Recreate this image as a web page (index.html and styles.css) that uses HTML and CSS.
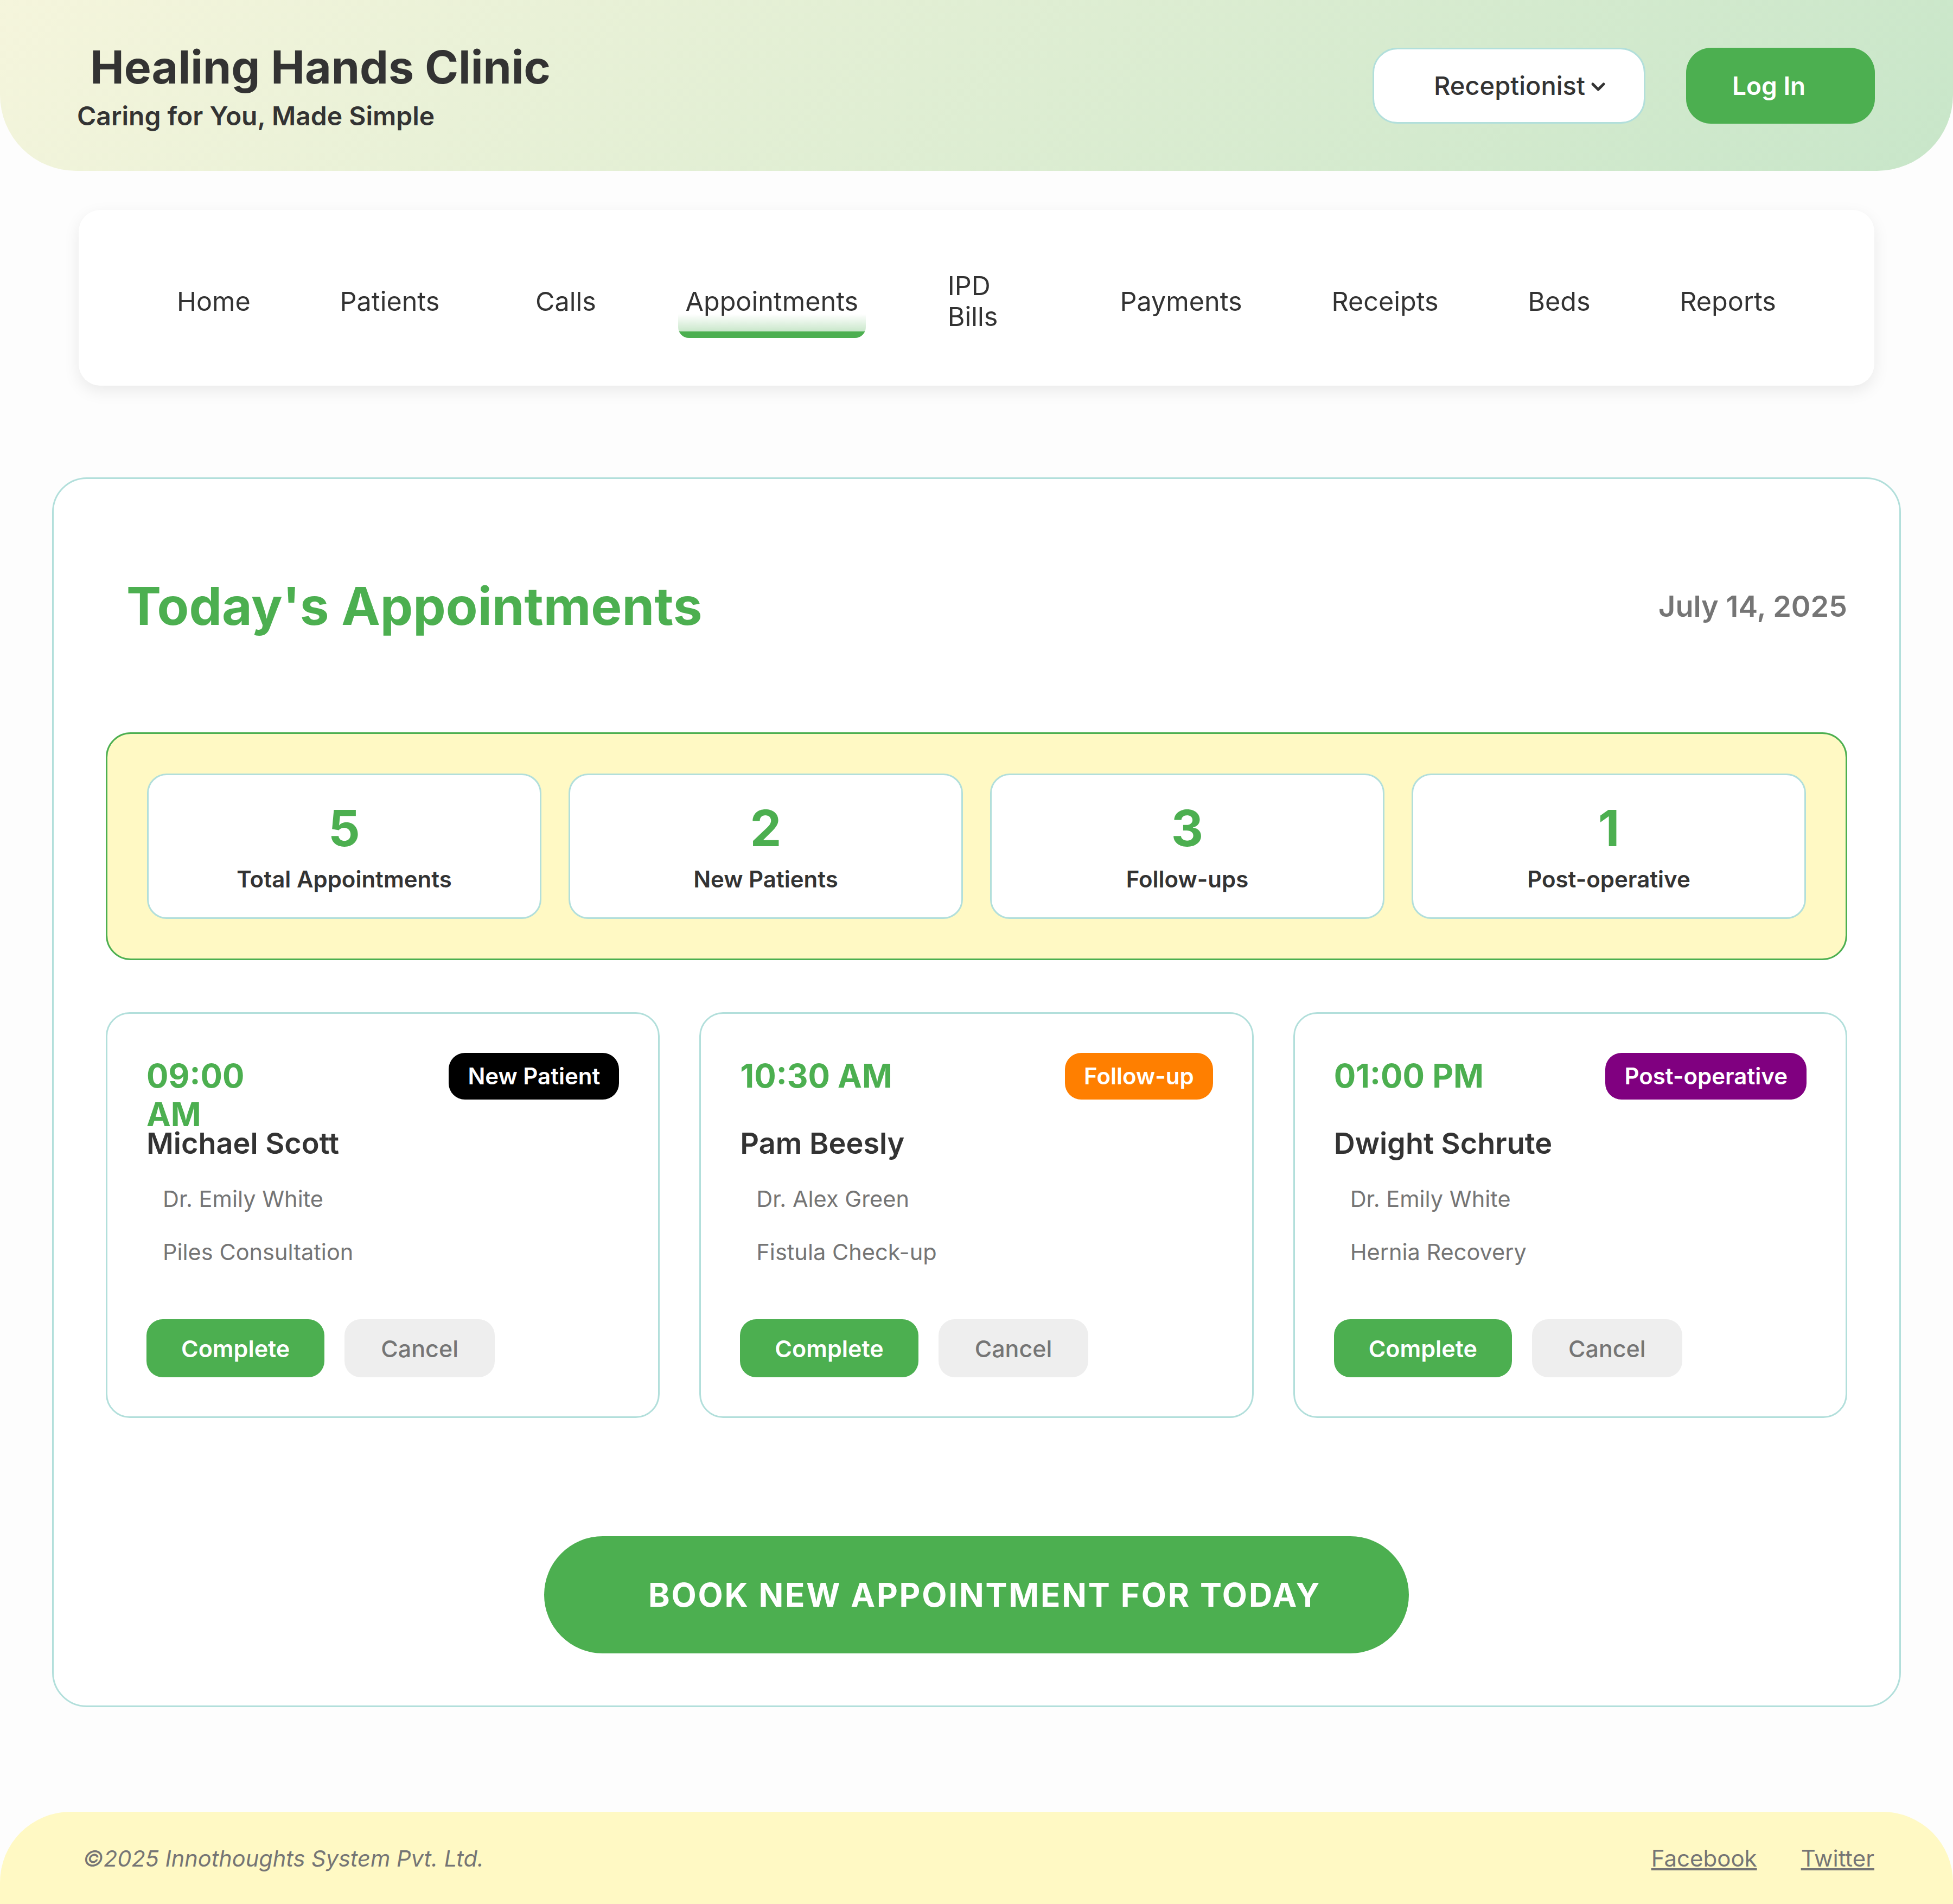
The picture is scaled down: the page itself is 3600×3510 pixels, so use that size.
FILE: index.html
```html
<!DOCTYPE html>
<html lang="en">
<head>
<meta charset="utf-8">
<title>Healing Hands Clinic</title>
<link rel="stylesheet" href="styles.css">
</head>
<body>
<header class="site-header">
  <div class="brand">
    <h1 class="brand-title">Healing Hands Clinic</h1>
    <p class="brand-tagline">Caring for You, Made Simple</p>
  </div>
  <div class="header-actions">
    <div class="role-select">
      <span>Receptionist</span>
      <svg class="chevron" viewBox="0 0 28 18" width="28" height="18" aria-hidden="true"><polyline points="4,4 14,14 24,4" fill="none" stroke="#333" stroke-width="5" stroke-linecap="round" stroke-linejoin="round"/></svg>
    </div>
    <button class="login-btn">Log In</button>
  </div>
</header>

<nav class="main-nav">
  <ul class="nav-list">
    <li><a class="nav-link" href="#">Home</a></li>
    <li><a class="nav-link" href="#">Patients</a></li>
    <li><a class="nav-link nav-link--calls" href="#">Calls</a></li>
    <li><a class="nav-link nav-link--active" href="#">Appointments</a></li>
    <li class="nav-item--narrow"><a class="nav-link" href="#">IPD Bills</a></li>
    <li><a class="nav-link" href="#">Payments</a></li>
    <li><a class="nav-link" href="#">Receipts</a></li>
    <li><a class="nav-link" href="#">Beds</a></li>
    <li><a class="nav-link" href="#">Reports</a></li>
  </ul>
</nav>

<main class="dashboard">
  <div class="dash-head">
    <h2 class="dash-title">Today's Appointments</h2>
    <div class="dash-date">July 14, 2025</div>
  </div>

  <section class="stats">
    <div class="stat-card"><div class="stat-num">5</div><div class="stat-label">Total Appointments</div></div>
    <div class="stat-card"><div class="stat-num">2</div><div class="stat-label">New Patients</div></div>
    <div class="stat-card"><div class="stat-num">3</div><div class="stat-label">Follow-ups</div></div>
    <div class="stat-card"><div class="stat-num">1</div><div class="stat-label">Post-operative</div></div>
  </section>

  <section class="appt-grid">
    <article class="appt-card">
      <div class="appt-head">
        <div class="appt-time appt-time--wrap">09:00 AM</div>
        <span class="badge badge--new">New Patient</span>
      </div>
      <h3 class="appt-name">Michael Scott</h3>
      <p class="appt-detail">Dr. Emily White</p>
      <p class="appt-detail appt-detail--last">Piles Consultation</p>
      <div class="appt-actions">
        <button class="btn btn--complete">Complete</button>
        <button class="btn btn--cancel">Cancel</button>
      </div>
    </article>
    <article class="appt-card">
      <div class="appt-head">
        <div class="appt-time">10:30 AM</div>
        <span class="badge badge--follow">Follow-up</span>
      </div>
      <h3 class="appt-name">Pam Beesly</h3>
      <p class="appt-detail">Dr. Alex Green</p>
      <p class="appt-detail appt-detail--last">Fistula Check-up</p>
      <div class="appt-actions">
        <button class="btn btn--complete">Complete</button>
        <button class="btn btn--cancel">Cancel</button>
      </div>
    </article>
    <article class="appt-card">
      <div class="appt-head">
        <div class="appt-time">01:00 PM</div>
        <span class="badge badge--postop">Post-operative</span>
      </div>
      <h3 class="appt-name">Dwight Schrute</h3>
      <p class="appt-detail">Dr. Emily White</p>
      <p class="appt-detail appt-detail--last">Hernia Recovery</p>
      <div class="appt-actions">
        <button class="btn btn--complete">Complete</button>
        <button class="btn btn--cancel">Cancel</button>
      </div>
    </article>
  </section>

  <div class="book-wrap">
    <button class="book-btn">Book New Appointment for Today</button>
  </div>
</main>

<footer class="site-footer">
  <p class="copyright">©2025 Innothoughts System Pvt. Ltd.</p>
  <div class="footer-links">
    <a href="#">Facebook</a>
    <a href="#">Twitter</a>
  </div>
</footer>
</body>
</html>
```

FILE: styles.css
```css
* { box-sizing: border-box; }

body {
  margin: 0;
  background: #fdfdfd;
  font-family: Inter, "Noto Sans", "Liberation Sans", sans-serif;
  color: #333;
}

/* Header */
.site-header {
  display: flex;
  justify-content: space-between;
  align-items: center;
  height: 315px;
  padding: 0 144px 0 142px;
  background: linear-gradient(135deg, #f5f5dc 0%, #c8e6c9 100%);
  border-radius: 0 0 140px 140px;
}
.brand-title {
  margin: 0 0 10px 24px;
  font-size: 84px;
  font-weight: 700;
  line-height: 102px;
  color: #333;
}
.brand-tagline {
  margin: 0;
  font-size: 48px;
  font-weight: 600;
  line-height: 58px;
  color: #333;
}
.header-actions {
  display: flex;
  align-items: center;
  gap: 75px;
}
.role-select {
  width: 503px;
  height: 140px;
  display: flex;
  align-items: center;
  justify-content: center;
  gap: 10px;
  padding-left: 40px;
  background: #fff;
  border: 3px solid #b2dfdb;
  border-radius: 46px;
  font-size: 47px;
  font-weight: 500;
  color: #333;
}
.chevron { display: block; margin-top: 4px; }
.login-btn {
  width: 348px;
  height: 140px;
  display: flex;
  align-items: center;
  padding: 0 0 0 85px;
  background: #4caf50;
  color: #fff;
  border: none;
  border-radius: 46px;
  font-family: inherit;
  font-size: 46px;
  font-weight: 600;
}

/* Nav */
.main-nav {
  margin: 72px 145px 0;
  padding: 72px 167px 60px;
  background: #fff;
  border-radius: 40px;
  box-shadow: 0 10px 30px rgba(0, 0, 0, 0.08);
}
.nav-list {
  display: flex;
  justify-content: space-between;
  align-items: center;
  margin: 0;
  padding: 0;
  list-style: none;
}
.nav-item--narrow { flex: 0 0 181px; }
.nav-link {
  display: block;
  padding: 39px 14px;
  font-size: 48.5px;
  line-height: 57px;
  color: #333;
  text-decoration: none;
  border-radius: 20px;
}
.nav-link--calls { margin-left: 12px; }
.nav-link--active {
  background: linear-gradient(to top, #4caf50 0, #4caf50 12px, rgba(76, 175, 80, 0.3) 12px, rgba(76, 175, 80, 0) 44px);
}

/* Dashboard */
.dashboard {
  margin: 169px 96px 0;
  padding: 96px;
  background: #fff;
  border: 3px solid #b2dfdb;
  border-radius: 64px;
}
.dash-head {
  display: flex;
  justify-content: space-between;
  align-items: center;
  padding-left: 38px;
  margin-bottom: 95px;
}
.dash-title {
  margin: 80px 0;
  font-size: 96px;
  font-weight: 700;
  line-height: 116px;
  color: #4caf50;
}
.dash-date {
  font-size: 54px;
  font-weight: 600;
  line-height: 65px;
  color: #757575;
}

.stats {
  display: grid;
  grid-template-columns: repeat(4, 1fr);
  gap: 50px;
  padding: 73px;
  background: #fff9c4;
  border: 3px solid #4caf50;
  border-radius: 46px;
}
.stat-card {
  padding: 42px 20px;
  background: #fff;
  border: 3px solid #b2dfdb;
  border-radius: 36px;
  text-align: center;
}
.stat-num {
  margin-bottom: 11px;
  font-size: 92px;
  font-weight: 700;
  line-height: 111px;
  color: #4caf50;
}
.stat-label {
  font-size: 42px;
  font-weight: 600;
  line-height: 56px;
  color: #333;
}

.appt-grid {
  display: grid;
  grid-template-columns: repeat(3, 1fr);
  gap: 73px;
  margin-top: 96px;
}
.appt-card {
  padding: 72px;
  background: #fff;
  border: 3px solid #b2dfdb;
  border-radius: 44px;
}
.appt-head {
  display: flex;
  justify-content: space-between;
  align-items: flex-start;
  height: 86px;
  margin-bottom: 50px;
}
.appt-time {
  margin-top: 7px;
  font-size: 60px;
  font-weight: 700;
  line-height: 71px;
  color: #4caf50;
}
.appt-time--wrap { width: min-content; }
.badge {
  padding: 17px 35px;
  border-radius: 30px;
  font-size: 42px;
  font-weight: 600;
  line-height: 52px;
  color: #fff;
  white-space: nowrap;
}
.badge--new { background: #000; }
.badge--follow { background: #ff7f00; }
.badge--postop { background: #800080; }
.appt-name {
  margin: 0 0 47px;
  font-size: 54px;
  font-weight: 600;
  line-height: 62px;
  color: #333;
}
.appt-detail {
  margin: 0 0 50px;
  padding-left: 30px;
  font-size: 41.5px;
  line-height: 48px;
  color: #757575;
}
.appt-detail--last { margin-bottom: 100px; }
.appt-actions {
  display: flex;
  gap: 37px;
}
.btn {
  padding: 28px 67px 27px;
  border: none;
  border-radius: 30px;
  font-family: inherit;
  font-size: 43px;
  line-height: 52px;
}
.btn--complete { padding-left: 64px; padding-right: 64px; background: #4caf50; color: #fff; font-weight: 600; }
.btn--cancel { background: #eeeeee; color: #757575; font-weight: 500; }

.book-wrap {
  display: flex;
  justify-content: center;
  margin-top: 218px;
}
.book-btn {
  width: 1594px;
  height: 216px;
  padding: 0 0 0 30px;
  border: none;
  border-radius: 108px;
  background: #4caf50;
  color: #fff;
  font-family: inherit;
  font-size: 60px;
  font-weight: 700;
  letter-spacing: 2.8px;
  text-transform: uppercase;
}

/* Footer */
.site-footer {
  display: flex;
  justify-content: space-between;
  align-items: center;
  height: 171px;
  margin-top: 193px;
  padding: 0 145px 0 153px;
  background: #fff9c4;
  border-radius: 130px 130px 0 0;
}
.copyright {
  margin: 0;
  font-size: 41.5px;
  font-style: italic;
  line-height: 48px;
  color: #757575;
}
.footer-links {
  display: flex;
  gap: 81px;
}
.footer-links a {
  font-size: 42px;
  line-height: 48px;
  color: #757575;
  text-decoration: underline;
}
```
